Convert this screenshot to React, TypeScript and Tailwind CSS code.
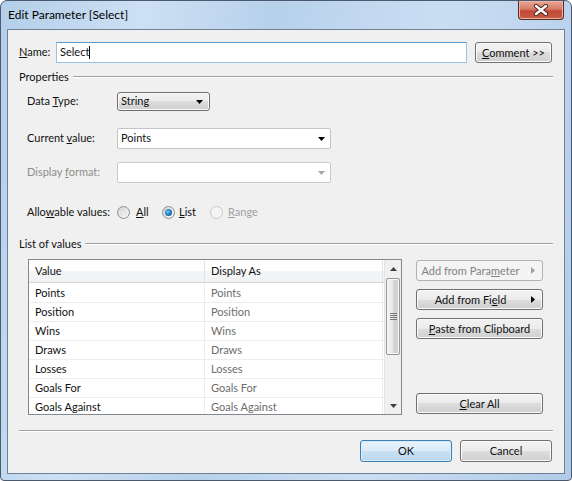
import React from "react";

function Btn({
  children,
  w,
  variant = "normal",
  arrow = false,
}: {
  children: React.ReactNode;
  w: string;
  variant?: "normal" | "disabled" | "default";
  arrow?: boolean;
}) {
  const base =
    variant === "disabled"
      ? "border-[#adb2b5] bg-[#f4f4f4] text-[#838383]"
      : variant === "default"
      ? "border-[#3c7fb1] bg-[linear-gradient(#e7f2fb_0%,#dcebf8_50%,#c9e0f3_50%,#bcd8ef_100%)] shadow-[inset_0_0_0_1px_#d6ecfb] text-[#111]"
      : "border-[#707070] bg-[linear-gradient(#f2f2f2_0%,#ebebeb_50%,#dddddd_50%,#cfcfcf_100%)] shadow-[inset_0_0_0_1px_#fbfbfb] text-[#111]";
  return (
    <div className={`${w} h-[21px] border rounded-[3px] flex items-center ${base}`}>
      <div className="flex-1 text-center leading-none">{children}</div>
      {arrow && (
        <div className="w-[18px] flex items-center justify-center">
          <svg width="4" height="7" viewBox="0 0 4 7">
            <path d="M0 0 L4 3.5 L0 7 Z" fill={variant === "disabled" ? "#a0a0a0" : "#000"} />
          </svg>
        </div>
      )}
    </div>
  );
}

function DownArrow({ color = "#000" }: { color?: string }) {
  return (
    <svg width="7" height="4" viewBox="0 0 7 4">
      <path d="M0 0 L7 0 L3.5 4 Z" fill={color} />
    </svg>
  );
}

function Radio({ state }: { state: "off" | "on" | "disabled" }) {
  if (state === "disabled") {
    return <div className="w-[13px] h-[13px] rounded-full border border-[#c9c9c9] bg-[#f4f4f4]" />;
  }
  return (
    <div className="w-[13px] h-[13px] rounded-full border border-[#8e8f8f] bg-[linear-gradient(135deg,#d4d4d4,#f9f9f9)] flex items-center justify-center">
      {state === "on" && (
        <div className="w-[7px] h-[7px] rounded-full bg-[radial-gradient(circle_at_40%_40%,#7fd0f5_0%,#2a8fd0_35%,#0f3f6c_100%)]" />
      )}
    </div>
  );
}

const rows = ["Points", "Position", "Wins", "Draws", "Losses", "Goals For", "Goals Against"];

export default function App() {
  return (
    <div className="w-[572px] h-[481px] overflow-hidden bg-white font-['Lato','Liberation_Sans',sans-serif] text-[11px] text-[#111]">
      <div className="w-[572px] h-[481px] rounded-t-[7px] rounded-b-[4px] border border-[#4b5b6d] bg-[linear-gradient(100deg,#b3cee9_0%,#cde0f4_22%,#b7d1eb_42%,#cadef3_68%,#b1cbe7_100%)] flex flex-col">
        {/* title bar */}
        <div className="h-[28px] flex items-start">
          <div className="h-[28px] flex items-center pl-[7px] flex-1 text-[12px] text-[#000]">Edit Parameter [Select]</div>
          <div className="mr-[7px] w-[46px] h-[19px] rounded-b-[4px] border border-t-0 border-[#5a2a22] bg-[linear-gradient(#e8a898_0%,#d77a68_45%,#c24a35_55%,#c65b45_100%)] shadow-[inset_0_0_0_1px_#eeb3a6] flex items-center justify-center">
            <svg width="16" height="12" viewBox="0 0 16 12">
              <path d="M3 2 L13 10 M13 2 L3 10" stroke="#4a1f18" strokeWidth="4.2" strokeLinecap="round" />
              <path d="M3 2 L13 10 M13 2 L3 10" stroke="#ffffff" strokeWidth="2.4" strokeLinecap="round" />
            </svg>
          </div>
        </div>

        {/* client */}
        <div className="ml-[6px] w-[558px] h-[445px] border border-[#6f8196] bg-[#f0f0f0] flex flex-col">
          {/* name row */}
          <div className="mt-[12px] h-[21px] flex items-center pl-[11px]">
            <div className="w-[37px]">
              <span className="underline">N</span>ame:
            </div>
            <div className="w-[411px] h-[21px] bg-white border border-[#9cc3e4] border-t-[#5b9ad0] flex items-center pl-[3px]">
              <span>Select</span>
              <span className="w-px h-[13px] bg-black" />
            </div>
            <div className="ml-[8px]">
              <Btn w="w-[77px]">
                <span className="underline">C</span>omment &gt;&gt;
              </Btn>
            </div>
          </div>

          {/* Properties */}
          <div className="mt-[7px] h-[14px] flex items-center pl-[11px] pr-[11px]">
            <span>Properties</span>
            <div className="flex-1 ml-[4px] h-[2px] border-t border-t-[#a0a0a0] border-b border-b-white" />
          </div>

          {/* Data Type */}
          <div className="mt-[8px] h-[19px] flex items-center pl-[19px]">
            <div className="w-[90px]">
              Data <span className="underline">T</span>ype:
            </div>
            <div className="w-[93px] h-[19px] border border-[#707070] rounded-[3px] bg-[linear-gradient(#f2f2f2_0%,#ebebeb_50%,#dddddd_50%,#cfcfcf_100%)] shadow-[inset_0_0_0_1px_#fbfbfb] flex items-center pl-[3px] pr-[6px]">
              <span className="flex-1">String</span>
              <DownArrow />
            </div>
          </div>

          {/* Current value */}
          <div className="mt-[17px] h-[21px] flex items-center pl-[19px]">
            <div className="w-[90px]">
              Current <span className="underline">v</span>alue:
            </div>
            <div className="w-[214px] h-[21px] border border-[#c2c4c9] rounded-[2px] bg-white flex items-center pl-[3px] pr-[5px]">
              <span className="flex-1">Points</span>
              <DownArrow />
            </div>
          </div>

          {/* Display format */}
          <div className="mt-[13px] h-[21px] flex items-center pl-[19px]">
            <div className="w-[90px] text-[#8d8d8d]">
              Display <span className="underline">f</span>ormat:
            </div>
            <div className="w-[214px] h-[21px] border border-[#c9cacd] rounded-[2px] bg-white flex items-center justify-end pr-[5px]">
              <DownArrow color="#a6a6a6" />
            </div>
          </div>

          {/* Allowable values */}
          <div className="mt-[22px] h-[14px] flex items-center pl-[19px]">
            <div className="w-[90px]">
              Allo<span className="underline">w</span>able values:
            </div>
            <div className="w-[45px] flex items-center gap-[6px]">
              <Radio state="off" />
              <span>
                <span className="underline">A</span>ll
              </span>
            </div>
            <div className="w-[48px] flex items-center gap-[4px]">
              <Radio state="on" />
              <span>
                <span className="underline">L</span>ist
              </span>
            </div>
            <div className="flex items-center gap-[5px] text-[#a0a0a0]">
              <Radio state="disabled" />
              <span>
                <span className="underline">R</span>ange
              </span>
            </div>
          </div>

          {/* List of values */}
          <div className="mt-[18px] h-[14px] flex items-center pl-[11px] pr-[11px]">
            <span>List of values</span>
            <div className="flex-1 ml-[4px] h-[2px] border-t border-t-[#a0a0a0] border-b border-b-white" />
          </div>

          {/* list area */}
          <div className="mt-[8px] flex pl-[20px]">
            <div className="w-[374px] h-[156px] border border-[#828790] bg-white flex">
              <div className="w-[355px] h-[154px] overflow-hidden flex flex-col">
                <div className="h-[23px] shrink-0 flex border-b border-[#d5d5d5] bg-[linear-gradient(#ffffff_0%,#ffffff_50%,#f4f5f7_50%,#f1f2f4_100%)]">
                  <div className="w-[176px] border-r border-[#e3e4e6] pl-[6px] flex items-center">Value</div>
                  <div className="w-[178px] border-r border-[#e3e4e6] pl-[6px] flex items-center">Display As</div>
                </div>
                <div className="pt-[1px] flex flex-col">
                  {rows.map((r) => (
                    <div key={r} className="h-[19px] shrink-0 flex border-b border-[#ededed]">
                      <div className="w-[176px] border-r border-[#ededed] pl-[6px] flex items-center">{r}</div>
                      <div className="w-[178px] border-r border-[#ededed] pl-[6px] flex items-center text-[#6d6d6d]">{r}</div>
                    </div>
                  ))}
                </div>
              </div>
              <div className="w-[17px] h-[154px] bg-[#f0f0f0] border-l border-[#e6e6e6] flex flex-col items-center">
                <div className="h-[17px] flex items-center justify-center">
                  <svg width="7" height="4" viewBox="0 0 7 4">
                    <path d="M0 4 L7 4 L3.5 0 Z" fill="#404040" />
                  </svg>
                </div>
                <div className="mt-[1px] w-[14px] h-[77px] rounded-[2px] border border-[#979797] bg-[linear-gradient(90deg,#f4f4f4_0%,#e8e8e8_50%,#d6d6d6_50%,#cfcfcf_100%)] shadow-[inset_0_0_0_1px_#f8f8f8] flex flex-col items-center justify-center gap-[1px]">
                  <div className="w-[7px] h-px bg-[#7a7a7a]" />
                  <div className="w-[7px] h-px bg-[#7a7a7a]" />
                  <div className="w-[7px] h-px bg-[#7a7a7a]" />
                  <div className="w-[7px] h-px bg-[#7a7a7a]" />
                </div>
                <div className="flex-1" />
                <div className="h-[17px] flex items-center justify-center">
                  <DownArrow color="#404040" />
                </div>
              </div>
            </div>

            <div className="ml-[14px] w-[127px] h-[156px] flex flex-col pt-[1px] pb-[1px]">
              <Btn w="w-[127px]" variant="disabled" arrow>
                Add from Para<span className="underline">m</span>eter
              </Btn>
              <div className="mt-[8px]">
                <Btn w="w-[127px]" arrow>
                  Add from Fi<span className="underline">e</span>ld
                </Btn>
              </div>
              <div className="mt-[8px]">
                <Btn w="w-[127px]">
                  <span className="underline">P</span>aste from Clipboard
                </Btn>
              </div>
              <div className="mt-auto">
                <Btn w="w-[127px]">
                  <span className="underline">C</span>lear All
                </Btn>
              </div>
            </div>
          </div>

          {/* separator */}
          <div className="mt-[15px] ml-[11px] w-[534px] h-[2px] border-t border-t-[#a0a0a0] border-b border-b-white" />

          {/* OK / Cancel */}
          <div className="mt-[8px] flex justify-end pr-[12px] gap-[8px]">
            <div className="h-[22px] w-[92px] border rounded-[3px] border-[#3c7fb1] bg-[linear-gradient(#e7f2fb_0%,#dcebf8_50%,#c9e0f3_50%,#bcd8ef_100%)] shadow-[inset_0_0_0_1px_#d6ecfb] flex items-center justify-center">
              OK
            </div>
            <div className="h-[22px] w-[92px] border rounded-[3px] border-[#707070] bg-[linear-gradient(#f2f2f2_0%,#ebebeb_50%,#dddddd_50%,#cfcfcf_100%)] shadow-[inset_0_0_0_1px_#fbfbfb] flex items-center justify-center">
              Cancel
            </div>
          </div>
        </div>
      </div>
    </div>
  );
}
